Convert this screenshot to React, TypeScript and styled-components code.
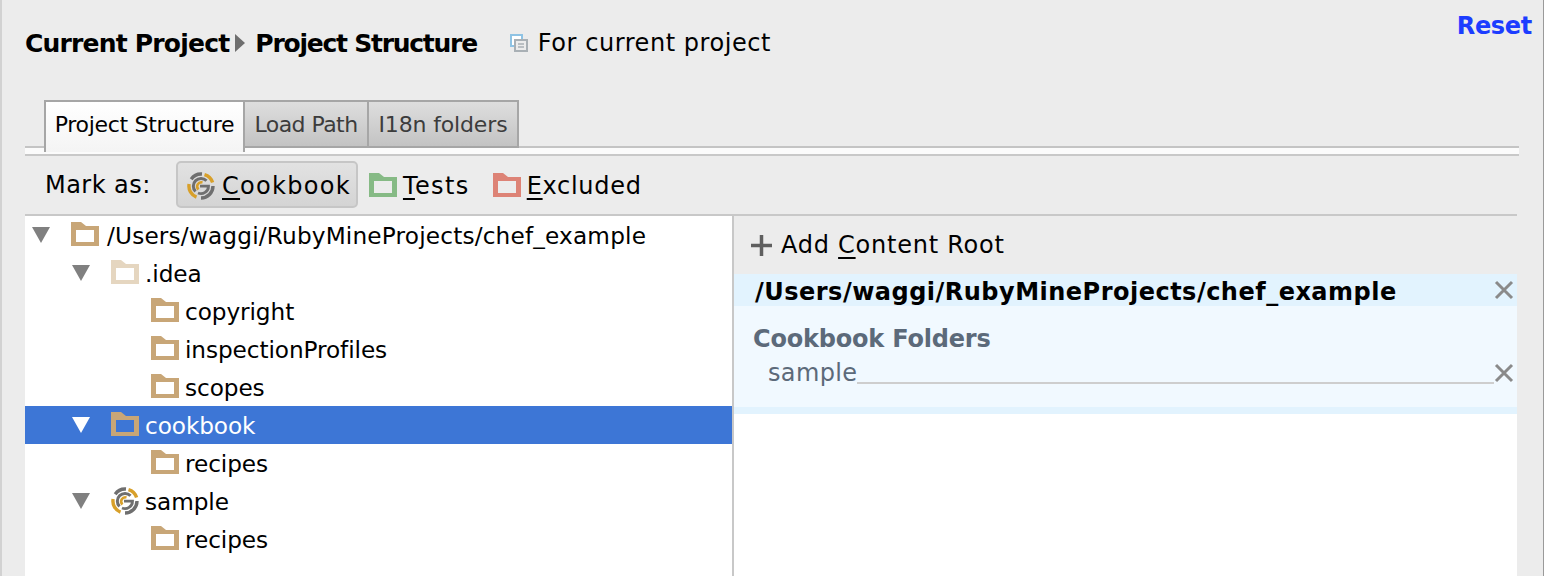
import styled, { createGlobalStyle } from "styled-components";

const GlobalStyle = createGlobalStyle`
  html, body {
    margin: 0;
    padding: 0;
    background: #ececec;
  }
`;

const Page = styled.div`
  box-sizing: border-box;
  width: 1544px;
  height: 576px;
  overflow: hidden;
  background: #ececec;
  border-left: 2px solid #d2d2d2;
  border-right: 1px solid #9a9a9a;
  padding-left: 23px;
  font-family: "DejaVu Sans", sans-serif;
  font-size: 24px;
  color: #000;
`;

const Top = styled.div`
  display: flex;
  height: 100px;
  padding-right: 11px;
`;

const Crumbs = styled.div`
  display: flex;
  align-items: center;
  height: 86px;
  flex: 1;
`;

const Crumb = styled.span<{ $spacing: number }>`
  font-weight: 700;
  font-size: 25px;
  letter-spacing: ${(p) => p.$spacing}px;
`;

const Scope = styled.span`
  display: flex;
  align-items: center;
  gap: 10px;
  margin-left: 33px;
  font-size: 24px;
  letter-spacing: 0.55px;
`;

const Reset = styled.span`
  margin-top: 12px;
  font-weight: 700;
  font-size: 24px;
  color: #1c3dff;
  letter-spacing: -0.3px;
`;

const TabBar = styled.div`
  display: flex;
  height: 48px;
  padding-left: 19px;
  border-bottom: 2px solid #c4c4c4;
  box-sizing: border-box;
  margin-right: 24px;
`;

const Tab = styled.div<{ $active?: boolean; $width: number; $spacing: number }>`
  box-sizing: border-box;
  display: flex;
  align-items: center;
  justify-content: center;
  height: ${(p) => (p.$active ? "52px" : "48px")};
  width: ${(p) => p.$width}px;
  padding-bottom: ${(p) => (p.$active ? "6px" : "0")};
  border: 2px solid #a6a6a6;
  border-left-width: ${(p) => (p.$active ? "2px" : "0")};
  border-bottom-width: ${(p) => (p.$active ? "0" : "2px")};
  background: ${(p) =>
    p.$active
      ? "linear-gradient(#ffffff, #f4f4f4)"
      : "linear-gradient(#dedede, #c3c3c3)"};
  color: ${(p) => (p.$active ? "#000" : "#3c3c3c")};
  font-size: 22px;
  letter-spacing: ${(p) => p.$spacing}px;
  position: relative;
  z-index: 1;
`;

const TabLine = styled.div`
  height: 6px;
  background: #fbfbfb;
  margin-right: 24px;
`;

const Toolbar = styled.div`
  display: flex;
  align-items: center;
  height: 60px;
  margin-right: 24px;
  padding: 0 0 1px 20px;
  border-top: 2px solid #c8c8c8;
  box-sizing: border-box;
`;

const MarkLabel = styled.span`
  width: 131px;
  letter-spacing: 0.45px;
`;

const MarkButton = styled.div<{ $pressed?: boolean; $spacing: number }>`
  box-sizing: border-box;
  display: flex;
  align-items: center;
  gap: ${(p) => (p.$pressed ? "7px" : "6px")};
  height: 47px;
  padding: ${(p) => (p.$pressed ? "2px 5px 0 9px" : "2px 0 0")};
  margin-right: ${(p) => (p.$pressed ? "11px" : "23px")};
  border-radius: 5px;
  border: ${(p) => (p.$pressed ? "2px solid #c6c6c6" : "none")};
  background: ${(p) => (p.$pressed ? "linear-gradient(#e2e2e2, #d4d4d4)" : "none")};
  letter-spacing: ${(p) => p.$spacing}px;
`;

const Mnemonic = styled.span`
  text-decoration: underline;
  text-decoration-thickness: 2px;
  text-underline-offset: 4px;
`;

const Split = styled.div`
  display: flex;
  height: 360px;
  margin-right: 26px;
  border-top: 2px solid #c8c8c8;
`;

const Tree = styled.div`
  width: 707px;
  background: #fff;
  flex: none;
`;

const Row = styled.div<{ $selected?: boolean; $level: number }>`
  display: flex;
  align-items: center;
  height: 38px;
  padding-left: ${(p) => 7 + p.$level * 40}px;
  background: ${(p) => (p.$selected ? "#3d76d6" : "transparent")};
  color: ${(p) => (p.$selected ? "#fff" : "#000")};
  font-size: 23.2px;
`;

const Disclosure = styled.span`
  width: 39px;
  flex: none;
  display: flex;
`;

const RowLabel = styled.span<{ $root?: boolean }>`
  margin-left: ${(p) => (p.$root ? "8px" : "6px")};
  letter-spacing: ${(p) => (p.$root ? "0.18px" : "-0.08px")};
  white-space: nowrap;
`;

const Details = styled.div`
  flex: 1;
  border-left: 2px solid #c8c8c8;
  background: #fff;
`;

const AddRoot = styled.div`
  display: flex;
  align-items: center;
  gap: 9px;
  height: 58px;
  background: #ececec;
  padding-left: 17px;
  box-sizing: border-box;
  letter-spacing: 0.75px;
`;

const RootHeader = styled.div`
  display: flex;
  align-items: center;
  justify-content: space-between;
  height: 32px;
  background: #e2f3fe;
  padding: 0 3px 0 21px;
  font-weight: 700;
  font-size: 24px;
  letter-spacing: 0.49px;
`;

const RootPath = styled.span`
  margin-top: 3px;
`;

const FolderBlock = styled.div`
  box-sizing: border-box;
  height: 108px;
  background: #f1f9ff;
  border-bottom: 7px solid #e2f3fe;
  padding: 18px 3px 0 19px;
  color: #5c6a7a;
`;

const BlockTitle = styled.div`
  font-weight: 700;
  font-size: 24px;
  letter-spacing: -0.2px;
  line-height: 30px;
`;

const FolderLine = styled.div`
  display: flex;
  align-items: center;
  height: 38px;
  padding-left: 15px;
`;

const FolderName = styled.span`
  letter-spacing: 0.35px;
`;

const Leader = styled.span`
  flex: 1;
  align-self: flex-end;
  height: 2px;
  margin-bottom: 8px;
  background: #cecece;
`;

const CrumbMark = styled.svg`
  margin: 0 10px 0 6px;
  flex: none;
`;

const Glyph = styled.svg`
  flex: none;
`;

const FolderGlyph = styled.svg`
  flex: none;
  margin-top: -2px;
`;

function Folder({ color = "#c8a677", inner = "#fff" }: { color?: string; inner?: string }) {
  return (
    <FolderGlyph width={28} height={24} viewBox="0 0 28 24">
      <path d="M0 0h10l5 4h13v20H0z" fill={color} />
      <rect x="5" y="8" width="18" height="12" fill={inner} />
    </FolderGlyph>
  );
}

function ChefLogo() {
  return (
    <Glyph width="28" height="28" viewBox="0 0 28 28">
      <g fill="none">
        <path d="M4.2 7.2A12 12 0 0 1 15 2" stroke="#6f6f6f" strokeWidth="3.4" />
        <path d="M17.5 2.6A12 12 0 0 1 25.6 10.5" stroke="#d8a02a" strokeWidth="3.4" />
        <path d="M26 14A12 12 0 0 1 14 26" stroke="#6f6f6f" strokeWidth="3.4" />
        <path d="M9.5 25.2A12 12 0 0 1 2.1 12" stroke="#d8a02a" strokeWidth="3.4" />
        <path d="M19.5 8.8A7.5 7.5 0 0 0 8.5 19.5" stroke="#6f6f6f" strokeWidth="3" />
        <path d="M15.5 10.4A4.2 4.2 0 0 0 11.5 17.5" stroke="#d8a02a" strokeWidth="2.6" />
        <path d="M13 14.2h8.5A7.5 7.5 0 0 1 11 21" stroke="#6f6f6f" strokeWidth="2.8" />
      </g>
    </Glyph>
  );
}

function Arrow({ color }: { color: string }) {
  return (
    <Glyph width="18" height="16" viewBox="0 0 18 16">
      <path d="M0 0h18L9 16z" fill={color} />
    </Glyph>
  );
}

function CrumbArrow() {
  return (
    <CrumbMark width="10" height="18" viewBox="0 0 10 18">
      <path d="M0 0l10 9-10 9z" fill="#6e6e6e" />
    </CrumbMark>
  );
}

function ScopeIcon() {
  return (
    <Glyph width="18" height="18" viewBox="0 0 18 18">
      <rect x="1" y="1" width="11" height="11" fill="#fff" stroke="#8fc3e4" strokeWidth="2" />
      <rect x="5" y="6" width="12" height="11" fill="#ececec" stroke="#a9b0b5" strokeWidth="2" />
      <path d="M8 10h6M8 13h6" stroke="#a9b0b5" strokeWidth="1.5" />
    </Glyph>
  );
}

function Cross() {
  return (
    <Glyph width="20" height="20" viewBox="0 0 20 20">
      <path d="M2 2l16 16M18 2L2 18" stroke="#8a8a8a" strokeWidth="3" fill="none" />
    </Glyph>
  );
}

function Plus() {
  return (
    <Glyph width="21" height="21" viewBox="0 0 21 21">
      <path d="M0 10.5h21M10.5 0v21" stroke="#5f5f5f" strokeWidth="3.5" fill="none" />
    </Glyph>
  );
}

const rows = [
  { level: 0, label: "/Users/waggi/RubyMineProjects/chef_example", open: true },
  { level: 1, label: ".idea", open: true, faded: true },
  { level: 2, label: "copyright" },
  { level: 2, label: "inspectionProfiles" },
  { level: 2, label: "scopes" },
  { level: 1, label: "cookbook", open: true, selected: true },
  { level: 2, label: "recipes" },
  { level: 1, label: "sample", open: true, chef: true },
  { level: 2, label: "recipes" },
];

export default function App() {
  return (
    <Page>
      <GlobalStyle />
      <Top>
        <Crumbs>
          <Crumb $spacing={-0.8}>Current Project</Crumb>
          <CrumbArrow />
          <Crumb $spacing={-1.25}>Project Structure</Crumb>
          <Scope>
            <ScopeIcon />
            For current project
          </Scope>
        </Crumbs>
        <Reset>Reset</Reset>
      </Top>
      <TabBar>
        <Tab $active $width={201} $spacing={-0.3}>Project Structure</Tab>
        <Tab $width={124} $spacing={-0.55}>Load Path</Tab>
        <Tab $width={150} $spacing={-0.15}>I18n folders</Tab>
      </TabBar>
      <TabLine />
      <Toolbar>
        <MarkLabel>Mark as:</MarkLabel>
        <MarkButton $pressed $spacing={1.3}>
          <ChefLogo />
          <span>
            <Mnemonic>C</Mnemonic>ookbook
          </span>
        </MarkButton>
        <MarkButton $spacing={1.4}>
          <Folder color="#86ba85" inner="#ececec" />
          <span>
            <Mnemonic>T</Mnemonic>ests
          </span>
        </MarkButton>
        <MarkButton $spacing={0.7}>
          <Folder color="#dd8376" inner="#ececec" />
          <span>
            <Mnemonic>E</Mnemonic>xcluded
          </span>
        </MarkButton>
      </Toolbar>
      <Split>
        <Tree>
          {rows.map((r, i) => (
            <Row key={i} $level={r.level} $selected={r.selected}>
              <Disclosure>
                {r.open && <Arrow color={r.selected ? "#fff" : "#808080"} />}
              </Disclosure>
              {r.chef ? (
                <ChefLogo />
              ) : (
                <Folder
                  color={r.faded ? "#e5d6c0" : "#c8a677"}
                  inner={r.selected ? "#3d76d6" : "#fff"}
                />
              )}
              <RowLabel $root={r.level === 0}>{r.label}</RowLabel>
            </Row>
          ))}
        </Tree>
        <Details>
          <AddRoot>
            <Plus />
            <span>
              Add <Mnemonic>C</Mnemonic>ontent Root
            </span>
          </AddRoot>
          <RootHeader>
            <RootPath>/Users/waggi/RubyMineProjects/chef_example</RootPath>
            <Cross />
          </RootHeader>
          <FolderBlock>
            <BlockTitle>Cookbook Folders</BlockTitle>
            <FolderLine>
              <FolderName>sample</FolderName>
              <Leader />
              <Cross />
            </FolderLine>
          </FolderBlock>
        </Details>
      </Split>
    </Page>
  );
}
